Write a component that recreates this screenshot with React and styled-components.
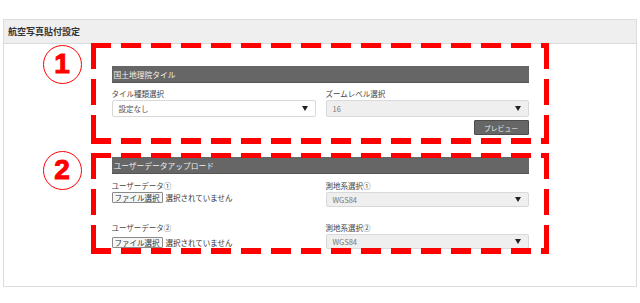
import React from "react";
import styled, { createGlobalStyle } from "styled-components";

const GlobalStyle = createGlobalStyle`
  html, body { margin: 0; padding: 0; background: #fff; }
  body { font-family: "Noto Sans CJK JP", "Noto Sans", sans-serif; color: #333; }
  * { box-sizing: border-box; }
`;

const Page = styled.div`
  padding: 19px 0 0 3px;
  width: 640px;
`;

const Panel = styled.section`
  width: 634px;
  height: 268px;
  border: 1px solid #dcdcdc;
  background: #fff;
`;

const PanelHeader = styled.header`
  height: 24px;
  background: #efefef;
  border-bottom: 1px solid #dcdcdc;
  padding-left: 4px;
  display: flex;
  align-items: center;
  font-size: 9px;
  font-weight: 700;
  color: #333;
`;

const PanelBody = styled.div`
  padding-top: 22px;
`;

const Form = styled.div`
  width: 417px;
  margin: 0 auto;
`;

const Group = styled.div`
  position: relative;
  margin-top: ${(p) => p.$mt || 0}px;
`;

const dash = (dir, len, gap) =>
  `repeating-linear-gradient(${dir}, #ff0000 0 ${len}px, transparent ${len}px ${len + gap}px)`;

const Annotation = styled.div`
  position: absolute;
  top: ${(p) => p.$top}px;
  bottom: ${(p) => p.$bottom}px;
  left: -21px;
  right: -20px;
  pointer-events: none;
  z-index: 2;
  background:
    ${dash("90deg", 20, 10)} left top / 100% 5px no-repeat,
    ${dash("90deg", 20, 10)} left bottom / 100% 6px no-repeat,
    ${dash("180deg", 26, 10)} left top / 5px 100% no-repeat,
    ${dash("180deg", 26, 10)} right top / 5px 100% no-repeat;
`;

const Badge = styled.div`
  position: absolute;
  left: -69px;
  top: ${(p) => p.$top}px;
  width: 39px;
  height: 39px;
  border: 1.5px solid #ff0000;
  border-radius: 50%;
  display: flex;
  align-items: center;
  justify-content: center;
  color: #ff0000;
  font-family: "Liberation Sans", Arial, sans-serif;
  font-weight: 700;
  font-size: 28px;
  line-height: 1;
  -webkit-text-stroke: 1px #ff0000;
  padding-bottom: 1px;
`;

const Bar = styled.div`
  height: 17px;
  background: #666;
  border-bottom: 1px solid #555;
  color: #f0f0f0;
  font-size: 7.75px;
  display: flex;
  align-items: center;
  padding-left: 2px;
`;

const Grid = styled.div`
  display: grid;
  grid-template-columns: 204px 203px;
  column-gap: 10px;
  align-items: start;
  margin-top: ${(p) => p.$mt || 0}px;
`;

const Field = styled.div`
  display: flex;
  flex-direction: column;
  align-items: flex-start;
`;

const Label = styled.div`
  height: 12px;
  line-height: 12px;
  margin-top: ${(p) => p.$mt || 0}px;
  font-size: 7.5px;
  color: #444;
  white-space: nowrap;
`;

const Select = styled.div`
  width: 100%;
  height: ${(p) => p.$h}px;
  background: ${(p) => p.$bg};
  border: 1px solid #d9d9d9;
  border-radius: 2px;
  display: flex;
  align-items: center;
  justify-content: space-between;
  padding: 0 7px 0 6px;
  font-size: 7.5px;
  color: ${(p) => p.$color || "#666"};
`;

const Arrow = styled.span`
  width: 0;
  height: 0;
  border-left: 3px solid transparent;
  border-right: 3px solid transparent;
  border-top: 5px solid #222;
`;

const ButtonRow = styled.div`
  display: flex;
  justify-content: flex-end;
  margin-top: 3px;
`;

const PreviewButton = styled.button`
  width: 55px;
  height: 15px;
  padding: 0;
  background: #666;
  border: 1px solid #4d4d4d;
  border-radius: 1px;
  color: #eee;
  font-family: inherit;
  font-size: 6.8px;
  display: flex;
  align-items: center;
  justify-content: center;
`;

const FileRow = styled.div`
  display: flex;
  align-items: center;
  margin-top: ${(p) => p.$mt || 0}px;
  font-size: 7.5px;
  color: #333;
`;

const FileButton = styled.span`
  height: 11px;
  line-height: 9px;
  padding: 0 2px;
  border: 1px solid #8a8a8a;
  border-radius: 1px;
  background: #f6f6f6;
  color: #333;
  font-size: 7.5px;
  white-space: nowrap;
`;

const FileStatus = styled.span`
  margin-left: 3px;
  white-space: nowrap;
`;

export default function App() {
  return (
    <>
      <GlobalStyle />
      <Page>
        <Panel>
          <PanelHeader>航空写真貼付設定</PanelHeader>
          <PanelBody>
            <Form>
              <Group>
                <Annotation $top={-23} $bottom={-9} />
                <Badge $top={-21}>1</Badge>
                <Bar>国土地理院タイル</Bar>
                <Grid>
                  <Field>
                    <Label $mt={5}>タイル種類選択</Label>
                    <Select $h={17} $bg="#fff" $color="#555">
                      <span>設定なし</span>
                      <Arrow />
                    </Select>
                  </Field>
                  <Field>
                    <Label $mt={5}>ズームレベル選択</Label>
                    <Select $h={17} $bg="#efefef" $color="#777">
                      <span>16</span>
                      <Arrow />
                    </Select>
                  </Field>
                </Grid>
                <ButtonRow>
                  <PreviewButton>プレビュー</PreviewButton>
                </ButtonRow>
              </Group>

              <Group $mt={22}>
                <Annotation $top={-4} $bottom={-5} />
                <Badge $top={-6}>2</Badge>
                <Bar>ユーザーデータアップロード</Bar>
                <Grid>
                  <Field>
                    <Label $mt={6}>ユーザーデータ①</Label>
                    <FileRow>
                      <FileButton>ファイル選択</FileButton>
                      <FileStatus>選択されていません</FileStatus>
                    </FileRow>
                  </Field>
                  <Field>
                    <Label $mt={6}>測地系選択①</Label>
                    <Select $h={15} $bg="#efefef" $color="#777">
                      <span>WGS84</span>
                      <Arrow />
                    </Select>
                  </Field>
                </Grid>
                <Grid $mt={15}>
                  <Field>
                    <Label>ユーザーデータ②</Label>
                    <FileRow $mt={3}>
                      <FileButton>ファイル選択</FileButton>
                      <FileStatus>選択されていません</FileStatus>
                    </FileRow>
                  </Field>
                  <Field>
                    <Label>測地系選択②</Label>
                    <Select $h={15} $bg="#efefef" $color="#777">
                      <span>WGS84</span>
                      <Arrow />
                    </Select>
                  </Field>
                </Grid>
              </Group>
            </Form>
          </PanelBody>
        </Panel>
      </Page>
    </>
  );
}
